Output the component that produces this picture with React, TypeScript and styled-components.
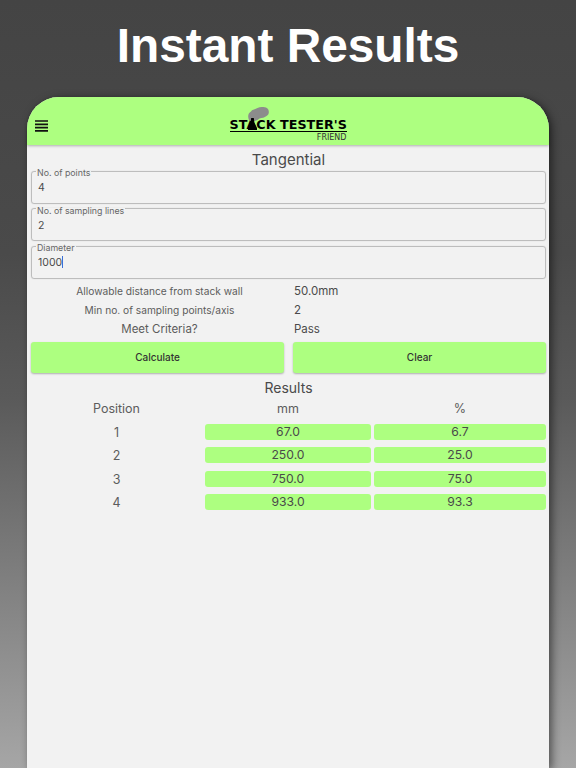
import React from "react";
import styled, { createGlobalStyle } from "styled-components";

const Global = createGlobalStyle`
  html, body { margin: 0; padding: 0; height: 768px; overflow: hidden; }
  body { font-family: Inter, Roboto, "Liberation Sans", sans-serif; color: #444; }
  * { box-sizing: border-box; }
`;

const Page = styled.div`
  width: 576px;
  height: 768px;
  overflow: hidden;
  display: flex;
  flex-direction: column;
  align-items: center;
  background: linear-gradient(180deg, #444444 0%, #4a4a4a 33%, #5a5a5a 52%, #a6a6a6 100%);
`;

const Headline = styled.h1`
  margin: 0;
  height: 97px;
  padding-top: 16px;
  font: bold 47.8px/60px "Liberation Sans", Arial, sans-serif;
  color: #fff;
  text-align: center;
`;

const Card = styled.div`
  width: 522px;
  flex: 1;
  background: #f2f2f2;
  border-radius: 32px 32px 0 0;
  box-shadow: 3px 2px 8px rgba(0, 0, 0, 0.5);
  display: flex;
  flex-direction: column;
`;

const AppBar = styled.header`
  position: relative;
  height: 48px;
  background: #adff80;
  border-radius: 32px 32px 0 0;
  box-shadow: 0 1px 3px rgba(0, 0, 0, 0.28);
  display: flex;
  justify-content: center;
  flex-shrink: 0;
`;

const Menu = styled.svg`
  position: absolute;
  left: 8px;
  top: 23px;
  width: 13px;
  height: 12px;
`;

const Logo = styled.div`
  position: relative;
  width: 117px;
  padding-top: 20px;
  font-family: "DejaVu Sans", sans-serif;
`;

const Cloud = styled.svg`
  position: absolute;
  left: 18px;
  top: 10px;
  width: 21px;
  height: 14px;
`;

const Chimney = styled.svg`
  position: absolute;
  left: 18.5px;
  top: 21px;
  width: 9px;
  height: 12px;
`;

const LogoName = styled.div`
  height: 15px;
  font-size: 12.7px;
  line-height: 15px;
  font-weight: bold;
  color: #000;
  white-space: nowrap;
  border-bottom: 1.5px solid #000;
  letter-spacing: 0.05px;
`;

const LogoSub = styled.div`
  margin-top: 1px;
  font-size: 8px;
  line-height: 9px;
  color: #333;
  text-align: right;
`;

const Body = styled.main`
  padding: 5px 3px 0 4px;
  display: flex;
  flex-direction: column;
`;

const Title = styled.div`
  height: 16px;
  font-size: 15px;
  line-height: 20px;
  text-align: center;
  color: #4a4a4a;
`;

const Fields = styled.div`
  display: flex;
  flex-direction: column;
`;

const Field = styled.fieldset`
  margin: 0;
  height: 37.7px;
  padding: 0 6px;
  border: 1px solid #bdbdbd;
  border-radius: 3px;
  box-shadow: 0 0 1px rgba(0, 0, 0, 0.2);
  min-width: 0;
`;

const Legend = styled.legend`
  padding: 0 1px;
  margin-left: -2px;
  font-size: 8.8px;
  line-height: 10px;
  color: #666;
`;

const LegendText = styled.span`
  position: relative;
  top: 2px;
`;

const FieldValue = styled.div`
  font-size: 10.5px;
  line-height: 14px;
  margin-top: 5px;
  color: #4a4a4a;
`;

const Caret = styled.span`
  display: inline-block;
  width: 1px;
  height: 12px;
  background: #3b6fd8;
  vertical-align: -2px;
`;

const Info = styled.div`
  display: grid;
  grid-template-columns: 257px 1fr;
  grid-auto-rows: 19px;
  margin-top: 2.5px;
  align-items: center;
`;

const InfoLabel = styled.div<{ $size: number }>`
  text-align: center;
  font-size: ${(p) => p.$size}px;
  color: #5c5c5c;
`;

const InfoValue = styled.div`
  padding-left: 6px;
  font-size: 11.5px;
  color: #4a4a4a;
`;

const Buttons = styled.div`
  display: grid;
  grid-template-columns: 253px 253px;
  gap: 9px;
  margin-top: 3.5px;
`;

const Button = styled.button`
  height: 31px;
  border: 0;
  border-radius: 3px;
  background: #adff80;
  box-shadow: 0 1px 2px rgba(0, 0, 0, 0.28);
  font: 500 10px Inter, sans-serif;
  color: #333;
  padding: 0 0 1px;
`;

const ResultsTitle = styled.div`
  margin-top: 5px;
  height: 19px;
  font-size: 14px;
  line-height: 19px;
  text-align: center;
  color: #4a4a4a;
`;

const Table = styled.div`
  display: grid;
  grid-template-columns: 171px 166px 172px;
  column-gap: 3px;
`;

const HeadCell = styled.div`
  height: 27px;
  padding-top: 3px;
  text-align: center;
  font-size: 12.5px;
  line-height: 18px;
  color: #5c5c5c;
`;

const PosCell = styled.div`
  height: 23.33px;
  text-align: center;
  font-size: 12.5px;
  line-height: 17px;
  color: #5c5c5c;
`;

const ValueCell = styled.div`
  height: 16px;
  margin-bottom: 7.33px;
  background: #adff80;
  border-radius: 3px;
  text-align: center;
  font-size: 12.2px;
  line-height: 16px;
  color: #4a4a4a;
`;

const info: [string, number, string][] = [
  ["Allowable distance from stack wall", 10.2, "50.0mm"],
  ["Min no. of sampling points/axis", 10.2, "2"],
  ["Meet Criteria?", 11.5, "Pass"],
];

const rows = [
  ["1", "67.0", "6.7"],
  ["2", "250.0", "25.0"],
  ["3", "750.0", "75.0"],
  ["4", "933.0", "93.3"],
];

export default function App() {
  return (
    <Page>
      <Global />
      <Headline>Instant Results</Headline>
      <Card>
        <AppBar>
          <Menu viewBox="0 0 13 12" aria-hidden>
            <path d="M0 1h13M0 4.3h13M0 7.6h13M0 10.9h13" stroke="#111" strokeWidth="1.7" />
          </Menu>
          <Logo>
            <LogoName>STACK TESTER'S</LogoName>
            <LogoSub>FRIEND</LogoSub>
            <Cloud viewBox="0 0 21 14" aria-hidden>
              <path d="M1 13C-0.5 10 0 6 3 4.5C4.5 2 7.5 2.5 9.5 1C13 -0.5 18 -0.5 20 2C21.5 4.5 21 8 18.5 9C16.5 11 14 10.5 11.5 11.5C9 14 3.5 15.5 1 13Z" fill="#8c8c8c" />
            </Cloud>
            <Chimney viewBox="0 0 9 12" aria-hidden>
              <path d="M3.2 0H5.8L6.4 4.5L9 10V12H0V10L2.6 4.5Z" fill="#000" />
            </Chimney>
          </Logo>
        </AppBar>
        <Body>
          <Title>Tangential</Title>
          <Fields>
            <Field>
              <Legend><LegendText>No. of points</LegendText></Legend>
              <FieldValue>4</FieldValue>
            </Field>
            <Field>
              <Legend><LegendText>No. of sampling lines</LegendText></Legend>
              <FieldValue>2</FieldValue>
            </Field>
            <Field>
              <Legend><LegendText>Diameter</LegendText></Legend>
              <FieldValue>
                1000
                <Caret />
              </FieldValue>
            </Field>
          </Fields>
          <Info>
            {info.map(([label, size, value]) => (
              <React.Fragment key={label}>
                <InfoLabel $size={size}>{label}</InfoLabel>
                <InfoValue>{value}</InfoValue>
              </React.Fragment>
            ))}
          </Info>
          <Buttons>
            <Button>Calculate</Button>
            <Button>Clear</Button>
          </Buttons>
          <ResultsTitle>Results</ResultsTitle>
          <Table>
            <HeadCell>Position</HeadCell>
            <HeadCell>mm</HeadCell>
            <HeadCell>%</HeadCell>
            {rows.map(([pos, mm, pct]) => (
              <React.Fragment key={pos}>
                <PosCell>{pos}</PosCell>
                <ValueCell>{mm}</ValueCell>
                <ValueCell>{pct}</ValueCell>
              </React.Fragment>
            ))}
          </Table>
        </Body>
      </Card>
    </Page>
  );
}
